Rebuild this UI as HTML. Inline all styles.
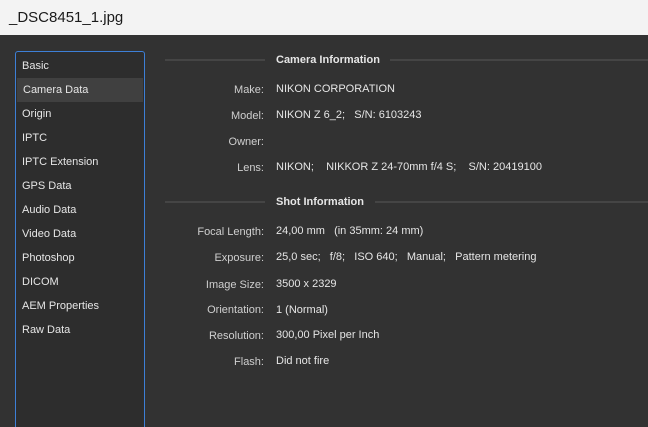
<!DOCTYPE html>
<html><head><style>
*{margin:0;padding:0;box-sizing:border-box}
html,body{width:648px;height:427px;overflow:hidden}
body{background:#323232;font-family:"Liberation Sans",sans-serif;font-size:11px;color:#e6e6e6;position:relative}
.title{position:absolute;left:0;top:0;width:648px;height:35px;background:#f3f3f3;color:#1a1a1a;font-size:15px;line-height:35px;padding-left:9px}
.side{position:absolute;left:15px;top:51px;width:130px;height:376px;border:1px solid #3d7fd6;border-bottom:none;border-radius:3px 3px 0 0;background:#2d2d2d;overflow:hidden}
.side div{height:24px;line-height:24px;padding-left:6px;font-size:11px;color:#e6e6e6}
.side .sel{background:#404040;margin:0 1px}
.a{position:absolute;white-space:nowrap;line-height:14px}
.l{right:384px;text-align:right;color:#cfcfcf;font-size:11px}
.v{left:276px;font-size:11px}
.h{left:276px;font-weight:bold;font-size:11px}
.ln{position:absolute;height:2px;background:#454545}
</style></head><body>
<div class="title">_DSC8451_1.jpg</div>
<div class="side">
<div style="margin-top:2px">Basic</div><div class="sel">Camera Data</div><div>Origin</div><div>IPTC</div><div>IPTC Extension</div><div>GPS Data</div><div>Audio Data</div><div>Video Data</div><div>Photoshop</div><div>DICOM</div><div>AEM Properties</div><div>Raw Data</div>
</div>
<div class="ln" style="left:165px;top:59px;width:100px"></div>
<div class="ln" style="left:390px;top:59px;width:258px"></div>
<div class="a h" style="top:53px">Camera Information</div>
<div class="a l" style="top:83px">Make:</div><div class="a v" style="top:82px">NIKON CORPORATION</div>
<div class="a l" style="top:109px">Model:</div><div class="a v" style="top:108px">NIKON Z 6_2;&nbsp;&nbsp; S/N: 6103243</div>
<div class="a l" style="top:135px">Owner:</div>
<div class="a l" style="top:161px">Lens:</div><div class="a v" style="top:160px">NIKON;&nbsp;&nbsp;&nbsp; NIKKOR Z 24-70mm f/4 S;&nbsp;&nbsp;&nbsp; S/N: 20419100</div>
<div class="ln" style="left:165px;top:201px;width:100px"></div>
<div class="ln" style="left:375px;top:201px;width:273px"></div>
<div class="a h" style="top:195px">Shot Information</div>
<div class="a l" style="top:225px">Focal Length:</div><div class="a v" style="top:224px">24,00 mm&nbsp;&nbsp; (in 35mm: 24 mm)</div>
<div class="a l" style="top:251px">Exposure:</div><div class="a v" style="top:250px">25,0 sec;&nbsp;&nbsp; f/8;&nbsp;&nbsp; ISO 640;&nbsp;&nbsp; Manual;&nbsp;&nbsp; Pattern metering</div>
<div class="a l" style="top:278px">Image Size:</div><div class="a v" style="top:277px">3500 x 2329</div>
<div class="a l" style="top:303px">Orientation:</div><div class="a v" style="top:303px">1 (Normal)</div>
<div class="a l" style="top:329px">Resolution:</div><div class="a v" style="top:328px">300,00 Pixel per Inch</div>
<div class="a l" style="top:355px">Flash:</div><div class="a v" style="top:354px">Did not fire</div>
</body></html>
